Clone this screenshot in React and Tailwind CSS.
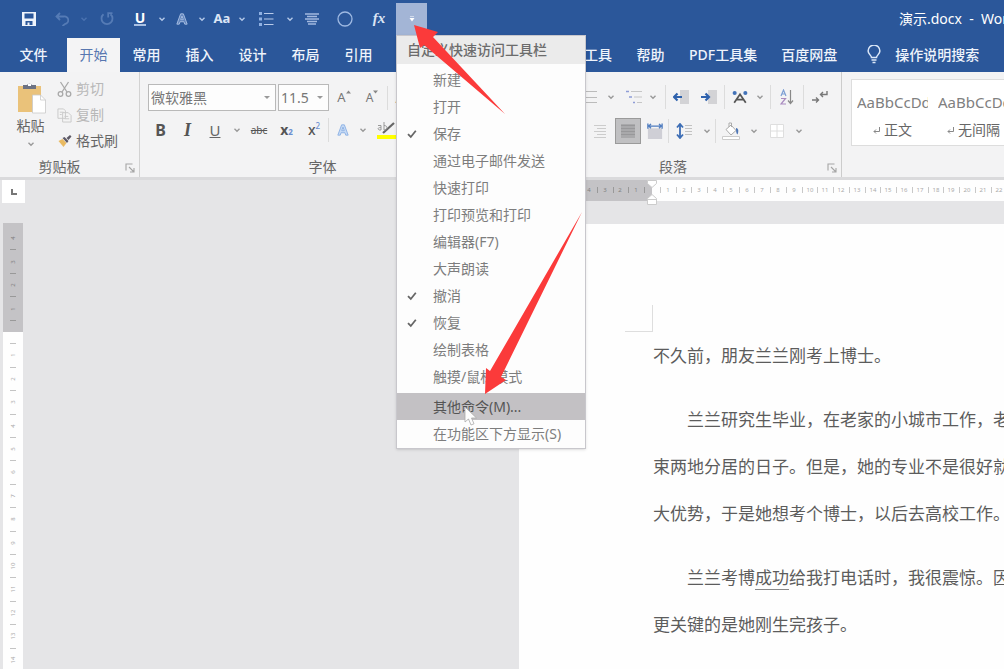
import React from 'react';
import clsx from 'clsx';

const TABS_LEFT = ['常用', '插入', '设计', '布局', '引用', '邮件', '审阅', '视图', '开发工具', '帮助', 'PDF工具集', '百度网盘'];

const MENU_ITEMS = [
  { label: '新建' },
  { label: '打开' },
  { label: '保存', checked: true },
  { label: '通过电子邮件发送' },
  { label: '快速打印' },
  { label: '打印预览和打印' },
  { label: '编辑器(F7)' },
  { label: '大声朗读' },
  { label: '撤消', checked: true },
  { label: '恢复', checked: true },
  { label: '绘制表格' },
  { label: '触摸/鼠标模式' },
];

const Chevron = ({ className }) => (
  <svg viewBox="0 0 8 8" className={clsx('h-2 w-2', className)} fill="none" stroke="currentColor" strokeWidth="1.4">
    <path d="M1.5 2.8 4 5.2 6.5 2.8" />
  </svg>
);

const QuickButton = ({ label, className, children }) => (
  <button aria-label={label} className={clsx('flex h-full items-center justify-center', className)}>
    {children}
  </button>
);

const QuickChevron = ({ label, className }) => (
  <QuickButton label={label} className={clsx('w-3', className || 'text-[#b4c8e8]')}>
    <Chevron />
  </QuickButton>
);

const CustomizeMenu = () => (
  <div className="absolute top-[35px] left-0 z-20 w-[190px] border border-[#c8c7cc] bg-[#fdfdfd] pb-px text-sm text-[#7d7d7d] shadow-sm">
    <h2 className="mb-0.5 flex h-7 items-center bg-[#ebebeb] pl-2.5 font-medium text-[#6c6c6c]">自定义快速访问工具栏</h2>
    <ul>
      {MENU_ITEMS.map((item) => (
        <li key={item.label}>
          <button className="flex h-[27px] w-full items-center whitespace-nowrap">
            <span className="flex w-9 pl-2.5">
              {item.checked && (
                <svg viewBox="0 0 10 10" className="h-2.5 w-2.5" fill="none" stroke="#666" strokeWidth="1.8">
                  <path d="M1 5.2 3.8 8 8.8 1.8" />
                </svg>
              )}
            </span>
            {item.label}
          </button>
        </li>
      ))}
      <li className="mt-[3px] bg-[#c3c1c4] text-[#555]">
        <button className="flex h-[27px] w-full items-center pl-9">其他命令(M)...</button>
      </li>
      <li>
        <button className="flex h-[27px] w-full items-center pl-9">在功能区下方显示(S)</button>
      </li>
    </ul>
  </div>
);

const TitleBar = () => (
  <header className="relative z-10 flex h-[37px] items-center bg-[#2b579a] pl-3 text-[#dbe5f5]">
    <QuickButton label="保存" className="w-[34px]">
      <svg viewBox="0 0 14 14" className="h-3.5 w-3.5">
        <path fill="#eef3fb" d="M0 0h14v14H0z" />
        <path fill="#2b579a" d="M2.500 1.500h9v5h-9zM3.500 9h7v4h-7z" />
        <path fill="#eef3fb" d="M5.500 10.500h2V13h-2z" />
      </svg>
    </QuickButton>
    <QuickButton label="撤消" className="w-8">
      <svg viewBox="0 0 14 14" className="h-3.5 w-3.5 text-[#557bb5]" fill="none" stroke="currentColor" strokeWidth="1.8">
        <path d="M5 1 1.5 4.5 5 8M1.5 4.5H9a3.6 3.6 0 0 1 1 7.5L7.5 14" />
      </svg>
    </QuickButton>
    <QuickChevron label="撤消选项" className="text-[#4a72b0]" />
    <QuickButton label="恢复" className="w-[34px]">
      <svg viewBox="0 0 14 14" className="h-3.5 w-3.5 text-[#557bb5]" fill="none" stroke="currentColor" strokeWidth="1.8">
        <path d="M3.5 2.3A5.5 5.5 0 1 0 10.5 2.3M8.2 5.5V1.2h4.3" />
      </svg>
    </QuickButton>
    <QuickButton label="下划线" className="w-8">
      <span className="border-b-2 border-[#a9c0e2] px-px text-sm leading-3 font-bold text-white">U</span>
    </QuickButton>
    <QuickChevron label="下划线选项" />
    <QuickButton label="文本效果" className="w-7">
      <svg viewBox="0 0 14 14" className="h-3.5 w-3" fill="#6184bd" stroke="#a9bfe2" strokeWidth="1.1">
        <path d="M1 13 5.4 1h3.2L13 13h-2.8l-.9-2.8H4.7L3.8 13zM5.5 7.8h3L7 3.5z" />
      </svg>
    </QuickButton>
    <QuickChevron label="文本效果选项" />
    <QuickButton label="更改大小写" className="w-7">
      <span className="text-[13px] font-bold">Aa</span>
    </QuickButton>
    <QuickChevron label="大小写选项" />
    <QuickButton label="项目符号" className="w-9">
      <svg viewBox="0 0 16 14" className="h-3.5 w-4">
        <path fill="#8fb1e3" d="M1 0h3v3H1zM1 5.5h3v3H1zM1 11h3v3H1z" />
        <path stroke="#b9cbea" strokeWidth="1.2" d="M6 1.5h9.5M6 7h9.5M6 12.5h9.5" />
      </svg>
    </QuickButton>
    <QuickChevron label="项目符号选项" />
    <QuickButton label="居中" className="w-8">
      <svg viewBox="0 0 14 12" className="h-3 w-3.5" stroke="#a3b9df" strokeWidth="1.5">
        <path d="M0 1h14M2 3.5h10M0 6h14M2 8.5h10M3 11h8" />
      </svg>
    </QuickButton>
    <QuickButton label="椭圆" className="w-[34px]">
      <svg viewBox="0 0 16 16" className="h-4 w-4" fill="none" stroke="#9eb9e2" strokeWidth="1.3">
        <circle cx="8" cy="8" r="7" />
      </svg>
    </QuickButton>
    <QuickButton label="公式" className="w-[34px]">
      <span className="font-['Liberation_Serif',serif] text-[15px] font-bold italic">fx</span>
    </QuickButton>
    <div className="relative h-full">
      <button aria-label="自定义快速访问工具栏" className="mt-[3px] flex h-8 w-[31px] items-center justify-center bg-[#a3b5d6] text-white">
        <svg viewBox="0 0 6 6" className="h-1.5 w-1.5" fill="currentColor">
          <path fillOpacity=".5" d="M1 0h4v1H1z" />
          <path d="M.5 2h5L3 5.500z" />
        </svg>
      </button>
      <CustomizeMenu />
    </div>
    <h1 className="ml-auto w-[105px] overflow-hidden text-sm whitespace-pre text-white">演示.docx  -  Word</h1>
  </header>
);

const TabBar = () => (
  <nav className="flex h-[35px] overflow-hidden bg-[#2b579a] text-sm font-medium whitespace-nowrap text-[#eef3fb]">
    <button className="w-[67px] shrink-0">文件</button>
    <button className="mt-px w-[53px] shrink-0 bg-[#f4f4f5] font-normal text-[#5877b0]">开始</button>
    {TABS_LEFT.map((tab) => (
      <button key={tab} className="min-w-[53px] shrink-0 px-3">
        {tab}
      </button>
    ))}
    <button className="flex shrink-0 items-center gap-3.5 pl-[18px]">
      <svg viewBox="0 0 14 19" className="h-[19px] w-3.5" fill="none" stroke="#dbe7f8" strokeWidth="1.5">
        <path d="M4.500 12.500c0-2-3.400-3.600-3.400-6.500a5.900 5.900 0 0 1 11.800 0c0 2.900-3.400 4.500-3.400 6.500zM4.500 15h5M5.500 17.500h3" />
      </svg>
      操作说明搜索
    </button>
  </nav>
);

const Tool = ({ label, className, children }) => (
  <button aria-label={label} className={clsx('flex h-[26px] shrink-0 items-center justify-center', className)}>
    {children}
  </button>
);

const ToolChevron = ({ label, className }) => (
  <Tool label={label} className={clsx('text-[#999]', className)}>
    <Chevron />
  </Tool>
);

const Divider = () => <span className="h-6 w-px shrink-0 bg-[#dcdcdc]" />;

const Launcher = ({ label }) => (
  <button aria-label={label} className="absolute right-1 bottom-1">
    <svg viewBox="0 0 10 10" className="h-2.5 w-2.5" fill="none" stroke="#a5a5a5" strokeWidth="1.1">
      <path d="M1 7.500V1h6.500M4 4l5 5M9 5v4H5" />
    </svg>
  </button>
);

const Group = ({ title, launcher, className, children }) => (
  <section className={clsx('relative flex shrink-0 flex-col pt-1', className)}>
    <div className="h-[81px]">{children}</div>
    <h2 className="text-center text-sm leading-5 text-[#666]">{title}</h2>
    {launcher && <Launcher label={`${title}设置`} />}
  </section>
);

const ClipboardGroup = () => (
  <Group title="剪贴板" launcher className="w-[140px] border-r border-[#d2d2d2] pr-5">
    <div className="flex pt-1.5">
      <button className="flex w-[66px] flex-col items-center text-sm text-[#666]">
        <svg viewBox="0 0 30 32" className="h-8 w-[30px]">
          <path fill="#eac27a" d="M2 4h23v26H2z" />
          <path fill="#6c7283" d="M7 3h4a3 3 0 0 1 5 0h4v4H7z" />
          <path fill="#fff" d="M12 2h3v2h-3z" />
          <path fill="#fff" stroke="#c9c9c9" strokeWidth=".8" d="M16.500 13h8l5 5v13h-13z" />
          <path fill="none" stroke="#c9c9c9" strokeWidth=".8" d="M24.500 13v5h5" />
        </svg>
        <span className="mt-0.5 leading-5">粘贴</span>
        <Chevron className="mt-1 text-[#999]" />
      </button>
      <div className="-mt-1.5 flex flex-col pr-px text-sm whitespace-nowrap text-[#b8b8b8]">
        <button className="flex h-[26px] items-center gap-1 -ml-1">
          <svg viewBox="0 0 14 16" className="h-4 w-[15px]" fill="none" stroke="#a9a9a9" strokeWidth="1.300">
            <path d="M3 1 9.500 11M11 1 4.500 11" />
            <circle cx="3" cy="13" r="2.300" />
            <circle cx="11" cy="13" r="2.300" />
          </svg>
          剪切
        </button>
        <button className="flex h-[26px] items-center gap-1 -ml-1">
          <svg viewBox="0 0 16 16" className="h-4 w-[15px]" fill="#f4f4f4" stroke="#c9c9c9">
            <path d="M1 1.500h6l2 2v8H1zM6 5.500h6l3 3v7H6z" />
            <path d="M3 5h4M3 7.500h2M8 9.500h4M8 12h5" />
          </svg>
          复制
        </button>
        <button className="flex h-[26px] items-center gap-1 text-[#666] -ml-1">
          <svg viewBox="0 0 14 14" className="h-3.5 w-[15px]">
            <path fill="#e9ba62" d="m1 7 4-2 4 4-3 4z" />
            <path fill="#5d5966" d="m5 4 2-1 4 4-1.500 2zM9 4l3.500-3L14 2.500 11 6z" />
          </svg>
          格式刷
        </button>
      </div>
    </div>
  </Group>
);

const FontGroup = () => (
  <Group title="字体" className="w-[365px]">
    <div className="flex items-center gap-0.5 pt-2 pl-2">
      <div className="relative w-32">
        <select aria-label="字体" className="h-[27px] w-full appearance-none border border-[#b9b9b9] bg-[#fdfdfd] pl-0.5 text-sm text-[#777]">
          <option>微软雅黑</option>
        </select>
        <span className="pointer-events-none absolute top-3 right-1.5 border-x-3 border-t-3 border-x-transparent border-t-[#999]" />
      </div>
      <div className="relative w-[51px]">
        <select aria-label="字号" className="h-[27px] w-full appearance-none border border-[#b9b9b9] bg-[#fdfdfd] pl-0.5 text-sm text-[#777]">
          <option>11.5</option>
        </select>
        <span className="pointer-events-none absolute top-3 right-1.5 border-x-3 border-t-3 border-x-transparent border-t-[#999]" />
      </div>
      <Tool label="增大字号" className="w-[26px] text-[13px] text-[#777]">
        A
        <svg viewBox="0 0 5 4" className="mb-3 h-1 w-[5px]" fill="#888"><path d="M0 3.500 2.500.5 5 3.500z" /></svg>
      </Tool>
      <Tool label="减小字号" className="w-[26px] text-xs text-[#777]">
        A
        <svg viewBox="0 0 5 4" className="mb-3 h-1 w-[5px]" fill="#888"><path d="M0 .5h5L2.500 3.500z" /></svg>
      </Tool>
      <Divider />
      <Tool label="大小写" className="w-7 text-sm text-[#777]">
        Aa
      </Tool>
    </div>
    <div className="flex items-center pt-1.5 pl-[7px] text-[#555]">
      <Tool label="加粗" className="w-[27px] text-base font-bold">B</Tool>
      <Tool label="倾斜" className="w-[27px] font-['Liberation_Serif',serif] text-lg font-bold italic">I</Tool>
      <Tool label="下划线" className="w-7 text-[15px] text-[#666] underline">U</Tool>
      <ToolChevron label="下划线样式" className="w-4" />
      <Tool label="删除线" className="w-7 text-[10px] line-through">abc</Tool>
      <Tool label="下标" className="w-[27px] text-sm font-bold">
        x<sub className="text-[8px] text-[#6a8ed0]">2</sub>
      </Tool>
      <Tool label="上标" className="w-7 text-sm font-medium">
        x<sup className="text-[8px] text-[#6a8ed0]">2</sup>
      </Tool>
      <Divider />
      <Tool label="文本效果" className="w-7">
        <svg viewBox="0 0 14 14" className="h-3.5 w-3" fill="#c7dbf6" stroke="#8db1e4" strokeWidth="1.100">
          <path d="M1 13 5.400 1h3.200L13 13h-2.800l-.9-2.800H4.700L3.800 13zM5.500 7.800h3L7 3.500z" />
        </svg>
      </Tool>
      <ToolChevron label="文本效果样式" className="w-3" />
      <Tool label="突出显示" className="ml-1.5 w-6">
        <svg viewBox="0 0 20 20" className="h-5 w-5">
          <path fill="#ffff00" d="M0 15h20v4H0z" />
          <path stroke="#666" strokeWidth="2.200" d="M6 13 17 3" />
          <path fill="none" stroke="#999" d="M1 5.500h3V10H2c-2-2 0-2.500 2-2.500M7 2v8c4 0 4-4.500 0-4.500" />
        </svg>
      </Tool>
    </div>
  </Group>
);

const IndentIcon = ({ flip }) => (
  <svg viewBox="0 0 16 14" className="h-3.5 w-4">
    <path fill="#d3d3d6" d="M7 0h9v14H7z" />
    <path fill="none" stroke="#2f62ad" strokeWidth="2.200" d={flip ? 'M0 7h8M4.500 3.500 8 7l-3.500 3.500' : 'M9 7H1.500M4.500 3.500 1 7l3.500 3.500'} />
  </svg>
);

const ParagraphGroup = () => (
  <Group title="段落" launcher className="w-[337px] border-r border-[#cccccc]">
    <div className="flex items-center pt-2">
      <Tool label="项目符号" className="ml-2 w-[26px]">
        <svg viewBox="0 0 16 14" className="h-3.5 w-4" stroke="#aaa">
          <path d="M0 1.500h2M4 1.500h12M0 7h2M4 7h12M0 12.500h2M4 12.500h12" />
        </svg>
      </Tool>
      <ToolChevron label="项目符号样式" className="w-4" />
      <Tool label="编号" className="ml-5 w-[26px]">
        <svg viewBox="0 0 18 14" className="h-3.5 w-[18px]" stroke="#bbb">
          <path d="M0 1.500h18M0 7.500h18M0 12.500h18" />
        </svg>
      </Tool>
      <ToolChevron label="编号样式" className="w-5" />
      <Tool label="多级列表" className="w-[26px]">
        <svg viewBox="0 0 16 14" className="h-3.5 w-4">
          <path stroke="#8f9dd6" strokeWidth="1.600" d="M0 1.500h3M3 7h3M7 12.500h2" />
          <path stroke="#c6c6c6" d="M5 1.500h11M8 7h8M11 12.500h5" />
        </svg>
      </Tool>
      <ToolChevron label="多级列表样式" className="w-3" />
      <span className="w-1.5" />
      <Divider />
      <Tool label="减少缩进量" className="w-[29px]"><IndentIcon /></Tool>
      <Tool label="增加缩进量" className="w-[27px]"><IndentIcon flip /></Tool>
      <span className="w-0.5" />
      <Divider />
      <Tool label="中文版式" className="w-[29px]">
        <svg viewBox="0 0 18 14" className="h-3.5 w-4" fill="none">
          <circle cx="3" cy="2.500" r="2.300" fill="#4272b8" />
          <circle cx="15" cy="2.500" r="2.300" fill="#4272b8" />
          <path stroke="#555" strokeWidth="2" d="M2.500 13.500 9 4l6.500 9.500M5.500 10h7" />
        </svg>
      </Tool>
      <ToolChevron label="中文版式样式" className="w-3" />
      <span className="w-1" />
      <Divider />
      <Tool label="排序" className="w-8">
        <svg viewBox="0 0 14 16" className="h-4 w-3.5" fill="none" strokeWidth="1.200">
          <path stroke="#7c9fd4" d="M1 7 3.500 1 6 7M2 5h3" />
          <path stroke="#a98bc0" d="M1 9.500h4.500L1 15h5" />
          <path stroke="#888" d="M10.500 1v13M8 11.500l2.500 3 2.500-3" />
        </svg>
      </Tool>
      <Divider />
      <Tool label="显示编辑标记" className="w-8">
        <svg viewBox="0 0 16 14" className="h-3.5 w-4" fill="none" stroke="#777" strokeWidth="1.400">
          <path d="M15 1v3.500H9M11 2 8.500 4.500 11 7M0 10h6.500M4 7.500 6.500 10 4 12.500" />
        </svg>
      </Tool>
    </div>
    <div className="flex items-center pt-2">
      <Tool label="左对齐" className="ml-2 w-[26px]" />
      <Tool label="居中" className="w-[26px]" />
      <Tool label="右对齐" className="ml-5 w-[30px]">
        <svg viewBox="0 0 12 14" className="h-3.5 w-3" stroke="#ccc">
          <path d="M0 1.500h12M3 4.500h9M0 7.500h12M3 10.500h9M0 13.500h12" />
        </svg>
      </Tool>
      <Tool label="两端对齐" className="w-[26px] border border-[#9a9a9a] bg-[#c0c0c2]">
        <svg viewBox="0 0 14 14" className="h-3.5 w-3.5">
          <path fill="#a9a9ab" d="M0 0h14v14H0z" />
          <path stroke="#98989a" d="M0 1.500h14M0 4.500h14M0 7.500h14M0 10.500h14" />
        </svg>
      </Tool>
      <Tool label="分散对齐" className="w-[27px]">
        <svg viewBox="0 0 18 18" className="h-[18px] w-4" fill="none">
          <path fill="#cfcfd6" d="M1 6h16v12H1z" />
          <path stroke="#4f7cbf" strokeWidth="1.500" d="M2 3.500h14M4.500 1 2 3.500 4.500 6M13.500 1 16 3.500 13.500 6M1 .5v6M17 .5v6" />
        </svg>
      </Tool>
      <Divider />
      <Tool label="行距" className="w-[30px]">
        <svg viewBox="0 0 16 16" className="h-4 w-4" fill="none">
          <path stroke="#3c6db5" strokeWidth="1.800" d="M4 1v14M1 4.500 4 1l3 3.500M1 11.500 4 15l3-3.500" />
          <path stroke="#c2c2c2" d="M9 2.500h7M9 5.500h7M9 8.500h7M9 11.500h7" />
        </svg>
      </Tool>
      <ToolChevron label="行距选项" className="w-4" />
      <Divider />
      <Tool label="底纹" className="w-[30px]">
        <svg viewBox="0 0 18 18" className="h-[18px] w-[18px]" fill="none">
          <path stroke="#aaa" fill="#fff" d="M4 7.500 9 3l5 5.500-5 4.500zM7 5V1h2.500v4" />
          <path fill="#4e77b6" d="M14 6c3 0 2.500 4 1.500 6.500-1.500-1-1.500-4-1.500-6.500z" />
          <path fill="#fff" stroke="#ccc" d="M.5 14.500h17v3H.5z" />
        </svg>
      </Tool>
      <ToolChevron label="底纹颜色" className="w-4" />
      <Tool label="边框" className="w-[30px]">
        <svg viewBox="0 0 14 14" className="h-3.5 w-3.5" fill="#fff" stroke="#dedede">
          <path d="M.5.5h13v13H.5zM7 .5v13M.5 7h13" />
        </svg>
      </Tool>
      <ToolChevron label="边框样式" className="w-3.5" />
    </div>
  </Group>
);

const StylesGroup = () => (
  <section className="flex min-w-0 flex-1 overflow-hidden pl-[9px]">
    <div className="mt-[7px] flex h-[67px] w-full overflow-hidden border border-r-0 border-[#dddddd] bg-white whitespace-nowrap text-[#808080]">
      {['正文', '无间隔'].map((name) => (
        <button key={name} className="flex w-[81px] shrink-0 flex-col items-center pt-2.5">
          <span className="w-[71px] overflow-hidden text-left text-[15px] leading-6">AaBbCcDdEe</span>
          <span className="flex items-center gap-1 pt-1.5 text-sm text-[#666]">
            <svg viewBox="0 0 7 7" className="h-[7px] w-[7px]" fill="none" stroke="#888">
              <path d="M6.500 0v4.500H1M3 2.500l-2 2 2 2" />
            </svg>
            {name}
          </span>
        </button>
      ))}
    </div>
  </section>
);

// One step of the horizontal scale is 63/4 px, snapped to whole pixels
const hStep = (n) => Math.round(n * 15.75);
const vStep = (n) => Math.round(n * 23.4);

const HorizontalRuler = () => (
  <svg className="h-[26px] w-full text-[6px]" fill="#aaa">
    <rect x="0" y="0" width="133" height="21" fill="#c4c3c6" />
    <rect x="133" y="0" width="100%" height="21" fill="#fefefe" />
    {[1, 2, 3, 4, 5, 6, 7, 8].map((n) => (
      <g key={n} textAnchor="middle">
        <text x={133 - hStep(n)} y="12" fill="#808080">{n}</text>
        <rect x={141 - hStep(n)} y="7" width="1" height="6" fill="#999" />
      </g>
    ))}
    {Array.from({ length: 60 }, (_, i) => i + 1).map((n) => (
      <g key={n} textAnchor="middle">
        <text x={133 + hStep(n)} y="12">{n}</text>
        <rect x={125 + hStep(n)} y="7" width="1" height="6" fill="#c8c8c8" />
      </g>
    ))}
    <path fill="#fff" stroke="#ccc" d="M128.500.5h9v3l-4.500 4-4.500-4zM128.500 24.500h9v-6l-4.500-4-4.500 4zM128.500 19.500h9" />
  </svg>
);

const VerticalRuler = () => (
  <svg className="w-5 flex-1 text-[6px]" fill="#aaa">
    <rect width="20" height="109" fill="#c4c3c6" />
    <rect y="109" width="20" height="100%" fill="#fefefe" />
    {[1, 2, 3, 4].map((n) => (
      <g key={n} textAnchor="middle">
        <text transform={`translate(12 ${109 - vStep(n)}) rotate(-90)`} fill="#808080">{n}</text>
        <rect x="7" y={120 - vStep(n)} width="6" height="1" fill="#999" />
      </g>
    ))}
    {Array.from({ length: 40 }, (_, i) => i + 1).map((n) => (
      <g key={n} textAnchor="middle">
        <text transform={`translate(12 ${109 + vStep(n)}) rotate(-90)`}>{n}</text>
        <rect x="7" y={97 + vStep(n)} width="6" height="1" fill="#c4c4c4" />
      </g>
    ))}
  </svg>
);

const DocumentPage = () => (
  <article className="flex-1 overflow-hidden bg-[#fefefe] text-[17px] leading-[47px] whitespace-nowrap text-[#5c5c5c]">
    <div className="mt-[81px] ml-[106px] h-[27px] w-7 border-r border-b border-[#dedede]" />
    <div className="pl-[134px]">
      <p className="mb-[17px]">不久前，朋友兰兰刚考上博士。</p>
      <p className="mb-[17px]">
        <span className="pl-[2em]">兰兰研究生毕业，在老家的小城市工作，老</span>
        <br />
        束两地分居的日子。但是，她的专业不是很好就
        <br />
        大优势，于是她想考个博士，以后去高校工作。
      </p>
      <p>
        <span className="pl-[2em]">
          兰兰考博<span className="border-b border-[#888]">成功</span>给我打电话时，我很震惊。因
        </span>
        <br />
        更关键的是她刚生完孩子。
      </p>
    </div>
  </article>
);

const Annotations = () => (
  <svg className="pointer-events-none absolute inset-0 z-30 h-full w-full">
    <path fill="#fdfdfd" stroke="#aaa" strokeWidth=".8" d="M465 407v15l3.500-3 2.500 6 3-1.200-2.500-5.800h5z" />
    <g fill="#fb3a3a">
      <path d="m414 25 24 7-5 5 72 77-81-69-4 3z" />
      <path d="m485 394 1-26 4 3 92-159-81 165 5 3z" />
    </g>
  </svg>
);

const App = () => (
  <div className="relative flex h-screen flex-col overflow-hidden bg-[#e5e5e7] font-['Noto_Sans','Noto_Sans_CJK_SC',sans-serif]">
    <TitleBar />
    <TabBar />
    <div className="flex h-[105px] overflow-hidden bg-[#f3f3f4]">
      <ClipboardGroup />
      <FontGroup />
      <ParagraphGroup />
      <StylesGroup />
    </div>
    <main className="flex min-h-0 flex-1 border-t-3 border-[#dadadc]">
      <div className="flex w-[25px] flex-col items-center">
        <button aria-label="制表符" className="mb-5 ml-0.5 flex h-[23px] w-[23px] items-center justify-center bg-white">
          <span className="h-1.5 w-1.5 border-b-2 border-l-2 border-[#777]" />
        </button>
        <VerticalRuler />
      </div>
      <div className="flex min-w-0 flex-1 flex-col pl-[494px]">
        <HorizontalRuler />
        <div className="h-[18px]" />
        <DocumentPage />
      </div>
    </main>
    <Annotations />
  </div>
);

export default App;
